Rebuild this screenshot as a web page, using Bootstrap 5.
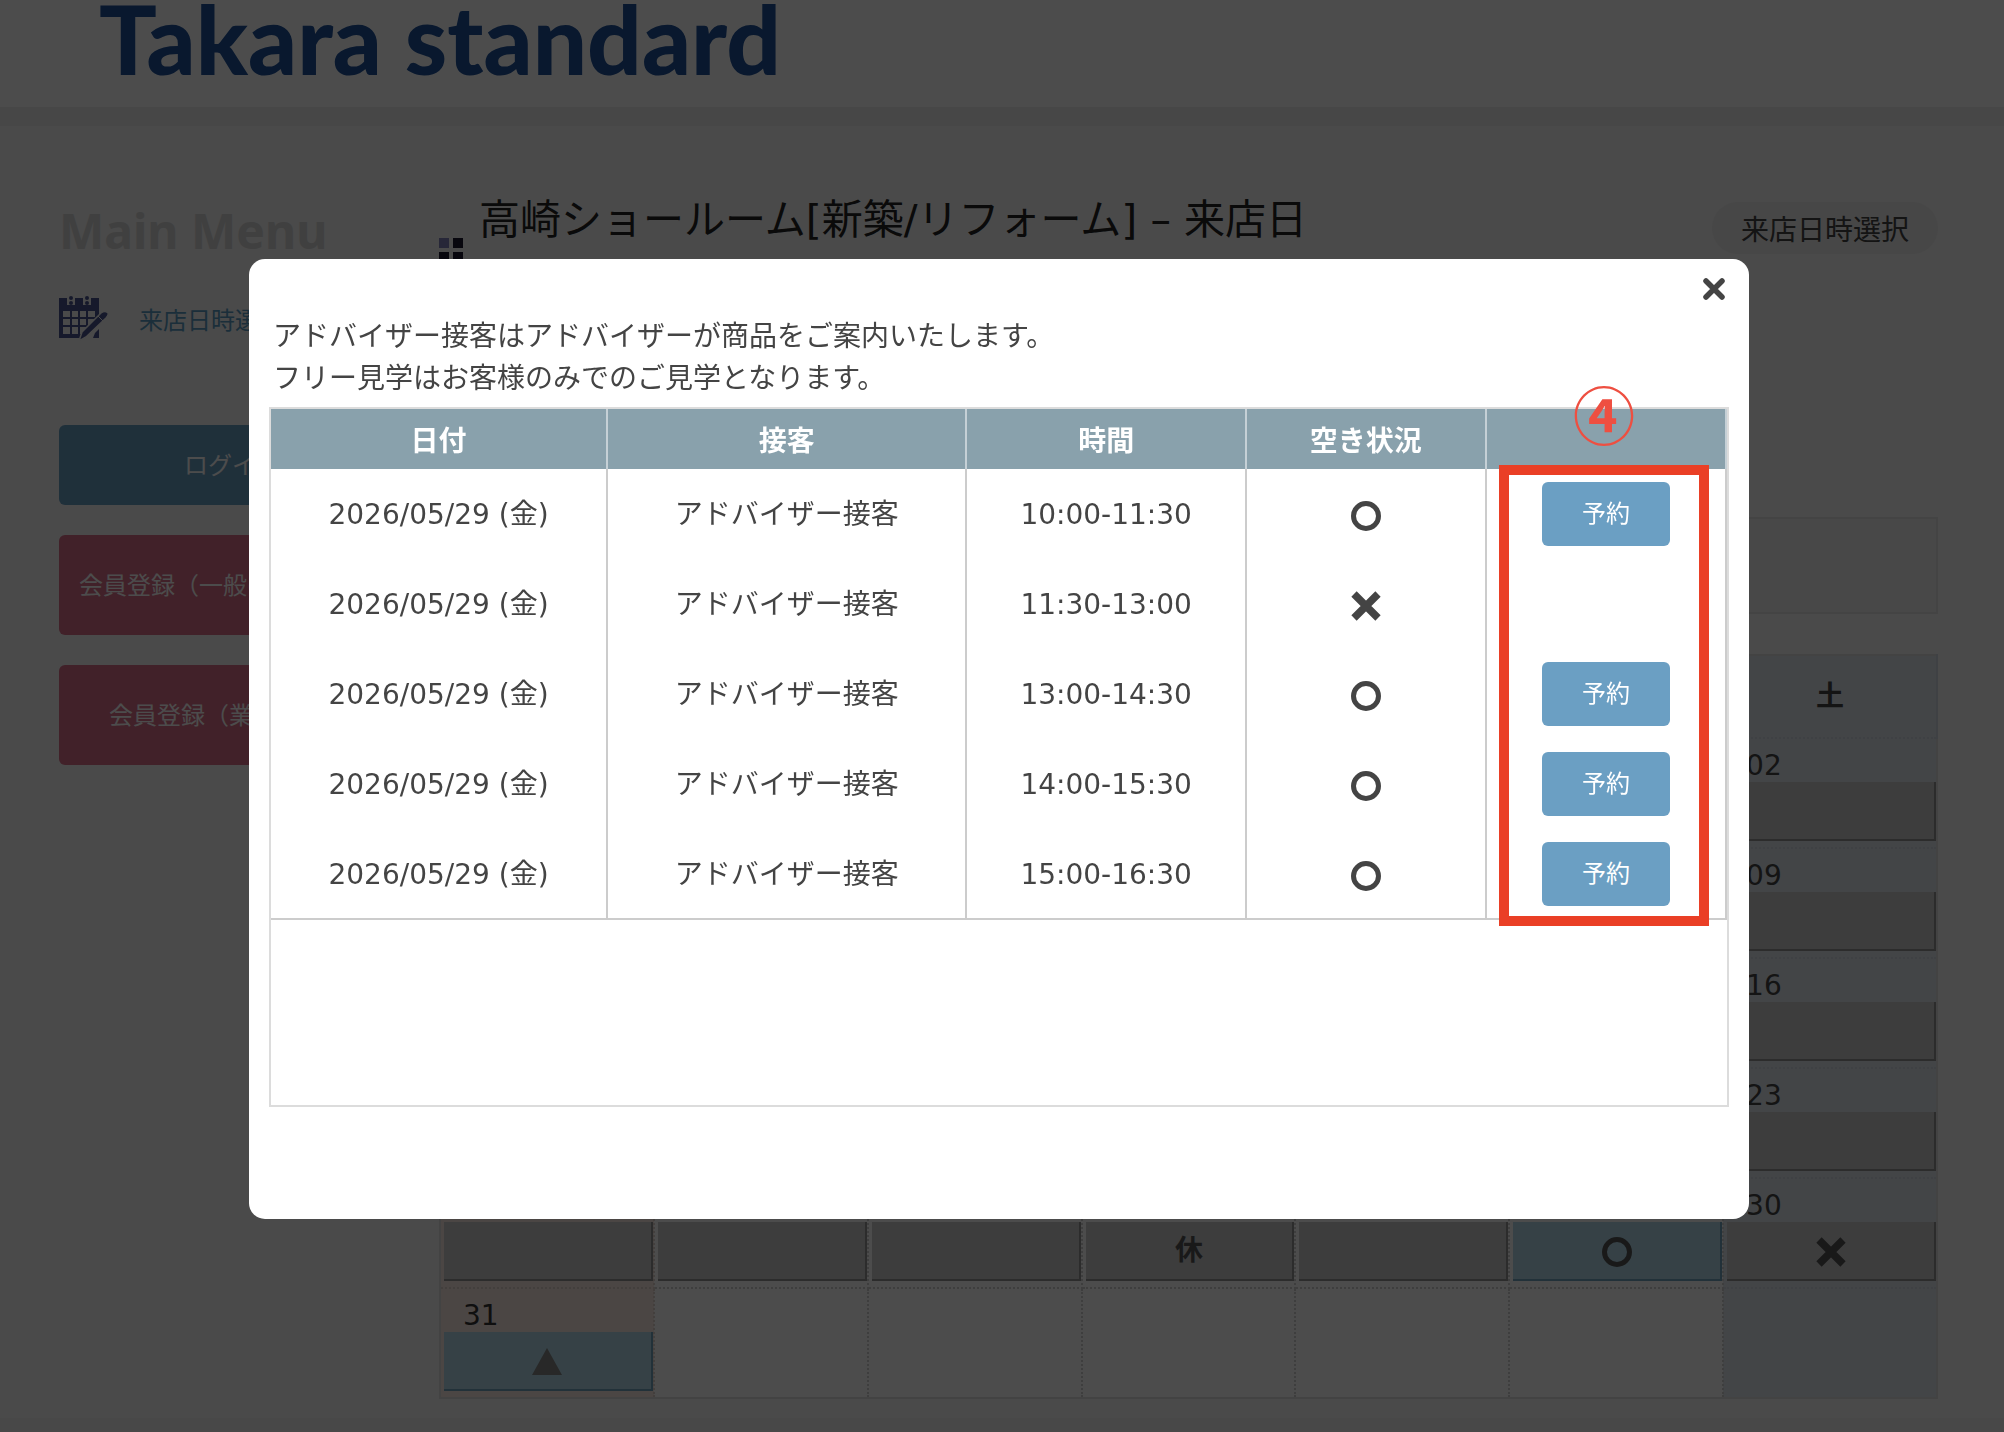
<!DOCTYPE html>
<html lang="ja">
<head>
<meta charset="utf-8">
<meta name="viewport" content="width=device-width, initial-scale=1">
<title>高崎ショールーム - 来店日時選択</title>
<link href="https://cdn.jsdelivr.net/npm/bootstrap@5.3.0/dist/css/bootstrap.min.css" rel="stylesheet">
<style>
  body { font-family: "DejaVu Sans", "Noto Sans CJK JP", sans-serif; font-size: 28px; line-height: 42px; color: #333; background: #f7f7f7; }
  .jp { font-family: "Noto Sans CJK JP", sans-serif; }
  .site-header { height: 126px; background: #fff; border-bottom: 19px solid #efefef; padding-left: 99px; }
  .logo { font: 900 96px/76px Lato, sans-serif; color: #20529a; }
  .page-body { padding: 0 66px 19px 59px; gap: 34px; }
  .side { width: 346px; flex: none; padding-top: 72px; }
  .menu-title { font: 700 48px/66px "Noto Sans", sans-serif; color: #d5d5d5; margin: 0 0 31px; }
  .menu-link { font-size: 24px; color: #5a9cc4; gap: 30px; margin-bottom: 82px; height: 48px; }
  .side-stack { gap: 30px; }
  .side-btn { font-size: 24px; line-height: 36px; border: 0; border-radius: 6px; color: #fff; background: #6aa0c4; height: 80px; padding: 0 0 2px; }
  .side-btn.member { background: #d96e89; height: 100px; text-align: left; padding-left: 20px; overflow: hidden; white-space: nowrap; }
  .side-btn.trade { padding-left: 50px; }
  .content { padding-top: 61px; }
  .heading { height: 330px; gap: 16px; }
  .heading h1 { font-size: 41px; line-height: 66px; font-weight: 400; margin: 0; color: #222; }
  .dots { margin-top: 51px; flex: none; }
  .step { font-size: 28px; line-height: 52px; background: #ededed; color: #444; border-radius: 26px; padding: 0 29px; margin-top: 15px; }
  .info-box { height: 97px; border: 2px solid #e3e3e3; background: #f0f0f0; margin-bottom: 40px; }
  .cal { table-layout: fixed; width: 100%; border: 2px solid #e0e0e0; background: #fff; border-collapse: collapse; }
  .cal th { height: 83px; text-align: center; color: #444; border-right: 2px solid #ddd; }
  .cal td { height: 110px; padding: 0 0 6px 3px; vertical-align: top; border: 2px dotted #d0d0d0; }
  .cal .sat { background: #e0e8ef; border-color: #d3d9e4; color: #444; }
  .cal .sun { background: #faeae5; border-color: #e2d2ce; }
  .day-no { height: 43px; line-height: 54px; padding-left: 19px; }
  .slot { height: 59px; width: 100%; background: #cbcbcb; border: 0 solid #959595; border-width: 0 2px 2px 0; color: #555; padding: 0; font-weight: 700; }
  .slot.open { background: #b4dbec; border-color: #72a4be; }
  .site-footer { background: #f2f2f2; }
  .modal-backdrop { --bs-backdrop-opacity: .7; }
  .picker { padding-right: 6px; }
  .picker .modal-dialog { max-width: 1500px; margin: 259px auto 0; }
  .picker .modal-content { border: 0; border-radius: 16px; color: #444; padding: 0 20px 112px; }
  .close-x { border: 0; background: none; padding: 0; width: 22px; height: 60px; margin-right: 4px; line-height: 0; }
  .close-row { height: 54px; }
  .notice { padding: 0 4px; margin: 0 0 10px; font-family: "Noto Sans CJK JP", sans-serif; }
  .panel { border: 2px solid #dcdcdc; height: 700px; position: relative; }
  .slots { width: 100%; table-layout: fixed; border-collapse: collapse; border-bottom: 2px solid #ccc; text-align: center; }
  .slots th { height: 60px; background: #89a1ac; color: #fff; font-family: "Noto Sans CJK JP", sans-serif; border-right: 2px solid #c5d0d6; padding: 0; }
  .slots td { height: 90px; padding: 2px 0 0; border-right: 2px solid #ccc; vertical-align: middle; }
  .slots td:last-child { padding: 0; }
  .book { width: 128px; height: 64px; padding: 0; border: 0; border-radius: 6px; background: #6b9fc3; color: #fff; font-size: 24px; }
  .mark-frame { position: absolute; right: 18px; top: 56px; width: 210px; height: 461px; border: 10px solid #ea3f26; pointer-events: none; }
  .mark-no { position: absolute; right: 18px; top: -38px; width: 210px; text-align: center; color: #ee4f41; font: 700 62px/84px "Noto Sans CJK JP", sans-serif; }
</style>
<script src="https://cdn.jsdelivr.net/npm/bootstrap@5.3.0/dist/js/bootstrap.bundle.min.js"></script>
</head>
<body class="overflow-hidden">
<svg class="d-none">
  <symbol id="i-ring" viewBox="0 0 30 30"><circle cx="15" cy="15" r="12.5" fill="none" stroke="currentColor" stroke-width="5"/></symbol>
  <symbol id="i-cross" viewBox="0 0 30 30"><path d="M3 3 27 27M27 3 3 27" fill="none" stroke="currentColor" stroke-width="7.5"/></symbol>
  <symbol id="i-tri" viewBox="0 0 30 30"><path d="M15 1 30 28H0z" fill="#858585"/></symbol>
</svg>
<div class="d-flex flex-column min-vh-100">
  <header class="site-header"><div class="logo">Takara standard</div></header>
  <div class="page-body d-flex">
    <nav class="side d-flex flex-column">
      <h2 class="menu-title">Main Menu</h2>
      <a href="#" class="menu-link d-flex align-items-center text-decoration-none jp">
        <svg width="50" height="48" viewBox="0 0 50 48">
          <path fill="#4b5590" d="M0 3H8V10H16V3H24V10H32V3H40V16H0zM0 16H4V39H26L24 43H0zM4 22H40V24H4zM4 30H32V32H4zM11 16H13V40H11zM19 16H21V40H19zM27 16H29V36H27zM36 16H40V20L36 24zM36 38 40 34V43H34z"/>
          <circle cx="12" cy="3" r="2" fill="#4b5590"/><circle cx="12" cy="8" r="2" fill="#4b5590"/><circle cx="28" cy="3" r="2" fill="#4b5590"/><circle cx="28" cy="8" r="2" fill="#4b5590"/>
          <path d="M20 46 23 37 42 18Q46 15 49 18Q50 20 47 23L27 42z" fill="#4b5590" stroke="#f7f7f7" stroke-width="1.5"/><path d="M39 21 45 27" stroke="#f7f7f7"/>
        </svg>
        <span>来店日時選択</span>
      </a>
      <div class="side-stack d-flex flex-column jp">
        <button class="side-btn">ログイン</button>
        <button class="side-btn member">会員登録（一般のお客様）</button>
        <button class="side-btn member trade">会員登録（業者様）</button>
      </div>
    </nav>
    <main class="content flex-grow-1">
      <div class="heading d-flex align-items-start">
        <svg class="dots" width="24" height="24" viewBox="0 0 24 24"><path fill="#8282bd" d="M0 0H10V10H0z"/><path fill="#1c1830" d="M14 0H24V10H14zM0 14H10V24H0zM14 14H24V24H14z"/></svg>
        <h1>高崎ショールーム[新築/リフォーム] – 来店日</h1>
        <div class="step jp ms-auto">来店日時選択</div>
      </div>
      <div class="info-box"></div>
      <table class="cal"><thead><tr id="week"></tr></thead><tbody id="days"></tbody></table>
    </main>
  </div>
  <footer class="site-footer flex-grow-1"></footer>
</div>

<div class="modal-backdrop show"></div>
<div class="modal picker d-block" role="dialog" aria-modal="true" aria-label="時間選択">
  <div class="modal-dialog">
    <div class="modal-content">
      <div class="close-row d-flex justify-content-end">
        <button class="close-x" aria-label="閉じる"><svg width="22" height="22" viewBox="0 0 22 22"><path d="M3 3 19 19M19 3 3 19" stroke="#444" stroke-width="5.5" stroke-linecap="round"/></svg></button>
      </div>
      <p class="notice">アドバイザー接客はアドバイザーが商品をご案内いたします。<br>フリー見学はお客様のみでのご見学となります。</p>
      <div class="panel">
        <table class="slots">
          <colgroup><col style="width:23.1%"><col style="width:24.7%"><col style="width:19.2%"><col style="width:16.5%"><col style="width:16.5%"></colgroup>
          <thead><tr><th>日付</th><th>接客</th><th>時間</th><th>空き状況</th><th></th></tr></thead>
          <tbody>
            <tr><td>2026/05/29 (金)</td><td>アドバイザー接客</td><td>10:00-11:30</td><td><svg width="30" height="30"><use href="#i-ring"/></svg></td><td><button class="book">予約</button></td></tr>
            <tr><td>2026/05/29 (金)</td><td>アドバイザー接客</td><td>11:30-13:00</td><td><svg width="30" height="30"><use href="#i-cross"/></svg></td><td></td></tr>
            <tr><td>2026/05/29 (金)</td><td>アドバイザー接客</td><td>13:00-14:30</td><td><svg width="30" height="30"><use href="#i-ring"/></svg></td><td><button class="book">予約</button></td></tr>
            <tr><td>2026/05/29 (金)</td><td>アドバイザー接客</td><td>14:00-15:30</td><td><svg width="30" height="30"><use href="#i-ring"/></svg></td><td><button class="book">予約</button></td></tr>
            <tr><td>2026/05/29 (金)</td><td>アドバイザー接客</td><td>15:00-16:30</td><td><svg width="30" height="30"><use href="#i-ring"/></svg></td><td><button class="book">予約</button></td></tr>
          </tbody>
        </table>
        <div class="mark-frame"></div>
        <div class="mark-no">④</div>
      </div>
    </div>
  </div>
</div>
<script>
  // May 2026 starts on a Friday; weeks run Sunday to Saturday
  const names = ['日', '月', '火', '水', '木', '金', '土'];
  const tone = i => i === 0 ? 'sun' : i === 6 ? 'sat' : '';
  const icon = n => `<svg width="30" height="30"><use href="#i-${n}"/></svg>`;
  const marks = { 27: '休', 29: icon('ring'), 30: icon('cross'), 31: icon('tri') };
  document.getElementById('week').innerHTML = names.map((n, i) => `<th class="${tone(i)}">${n}</th>`).join('');
  let html = '';
  for (let w = 0; w < 6; w++) {
    html += '<tr>';
    for (let i = 0; i < 7; i++) {
      const d = w * 7 + i - 4;
      html += `<td class="${tone(i)}">`;
      if (d > 0 && d < 32) html += `<div class="day-no">${String(d).padStart(2, '0')}</div><button class="slot d-block ${d === 29 || d === 31 ? 'open' : ''}">${marks[d] || ''}</button>`;
      html += '</td>';
    }
    html += '</tr>';
  }
  document.getElementById('days').innerHTML = html;
</script>
</body>
</html>
